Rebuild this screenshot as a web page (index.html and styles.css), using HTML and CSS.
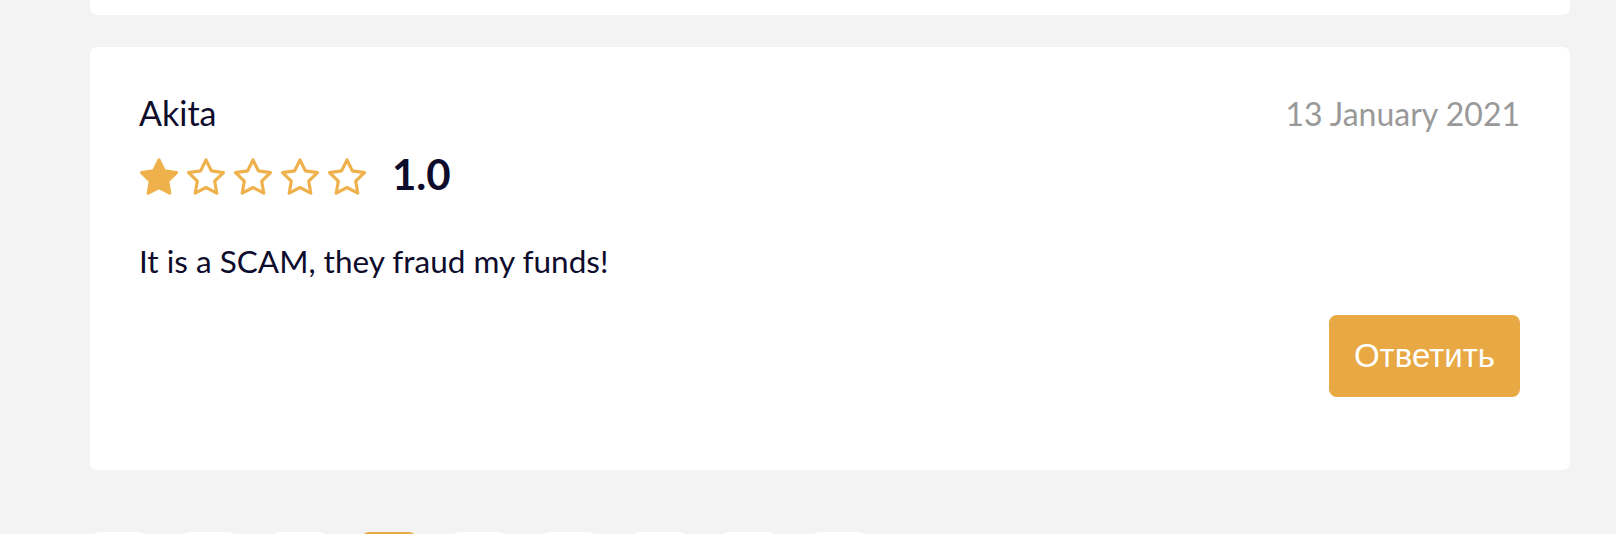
FILE: index.html
```html
<!DOCTYPE html>
<html lang="ru">
<head>
  <meta charset="UTF-8">
  <meta name="viewport" content="width=device-width, initial-scale=1.0">
  <title>Отзывы</title>
  <link rel="stylesheet" href="styles.css">
</head>
<body>
  <div class="reviews">
    <div class="review review-prev"></div>

    <div class="review">
      <div class="review-head">
        <span class="review-author">Akita</span>
        <span class="review-date">13 January 2021</span>
      </div>

      <div class="rating">
        <svg class="star filled" viewBox="0 0 24 24"><polygon points="12,1.8 15.23,8.35 22.46,9.4 17.23,14.5 18.47,21.7 12,18.3 5.53,21.7 6.77,14.5 1.54,9.4 8.77,8.35"/></svg>
        <svg class="star" viewBox="0 0 24 24"><polygon points="12,1.8 15.23,8.35 22.46,9.4 17.23,14.5 18.47,21.7 12,18.3 5.53,21.7 6.77,14.5 1.54,9.4 8.77,8.35"/></svg>
        <svg class="star" viewBox="0 0 24 24"><polygon points="12,1.8 15.23,8.35 22.46,9.4 17.23,14.5 18.47,21.7 12,18.3 5.53,21.7 6.77,14.5 1.54,9.4 8.77,8.35"/></svg>
        <svg class="star" viewBox="0 0 24 24"><polygon points="12,1.8 15.23,8.35 22.46,9.4 17.23,14.5 18.47,21.7 12,18.3 5.53,21.7 6.77,14.5 1.54,9.4 8.77,8.35"/></svg>
        <svg class="star" viewBox="0 0 24 24"><polygon points="12,1.8 15.23,8.35 22.46,9.4 17.23,14.5 18.47,21.7 12,18.3 5.53,21.7 6.77,14.5 1.54,9.4 8.77,8.35"/></svg>
        <span class="rating-value">1.0</span>
      </div>

      <p class="review-text">It is a SCAM, they fraud my funds!</p>

      <div class="review-actions">
        <button class="reply-btn">Ответить</button>
      </div>
    </div>

    <div class="pagination">
      <a class="page">‹</a>
      <a class="page">1</a>
      <a class="page">2</a>
      <a class="page active">3</a>
      <a class="page">4</a>
      <a class="page">5</a>
      <a class="page">6</a>
      <a class="page">7</a>
      <a class="page">›</a>
    </div>
  </div>
</body>
</html>
```

FILE: styles.css
```css
* { box-sizing: border-box; margin: 0; padding: 0; }
body {
  font-family: Lato, 'Noto Sans', sans-serif;
  background-color: #f3f3f3;
  color: #0e0c2c;
}
.reviews {
  padding: 0 46px 0 90px;
}
.review {
  background: #fff;
  border-radius: 7px;
  padding: 46px 50px 73px 49px;
  margin-bottom: 32px;
}
.review-prev {
  height: 15px;
  padding: 0;
  border-radius: 0 0 7px 7px;
}
.review-head {
  display: flex;
  justify-content: space-between;
  align-items: baseline;
}
.review-author {
  font-size: 34px;
  line-height: 40px;
}
.review-date {
  font-size: 32px;
  line-height: 40px;
  color: #999;
}
.rating {
  display: flex;
  align-items: center;
  gap: 7px;
  margin-top: 20px;
}
.star {
  width: 40px;
  height: 40px;
}
.star polygon {
  fill: none;
  stroke: #efb14b;
  stroke-width: 1.9;
  stroke-linejoin: round;
}
.star.filled polygon {
  fill: #efb14b;
}
.rating-value {
  font-size: 42px;
  font-weight: 700;
  line-height: 40px;
  padding-bottom: 5px;
  margin-left: 18px;
}
.review-text {
  font-size: 31.5px;
  line-height: 38px;
  margin-top: 43px;
}
.review-actions {
  display: flex;
  justify-content: flex-end;
  margin-top: 35px;
}
.reply-btn {
  font-family: 'Liberation Sans', Arial, sans-serif;
  font-size: 33px;
  line-height: 82px;
  height: 82px;
  padding: 0 25px;
  border: none;
  border-radius: 8px;
  background-color: #e8a843;
  color: #fff;
  cursor: pointer;
}
.pagination {
  display: flex;
  gap: 36px;
  padding-left: 2px;
  margin-top: 62px;
}
.page {
  width: 54px;
  height: 50px;
  border-radius: 7px;
  background: #fff;
  display: flex;
  align-items: center;
  justify-content: center;
  font-size: 24px;
}
.page.active {
  background: #e8a843;
  color: #fff;
}
```
